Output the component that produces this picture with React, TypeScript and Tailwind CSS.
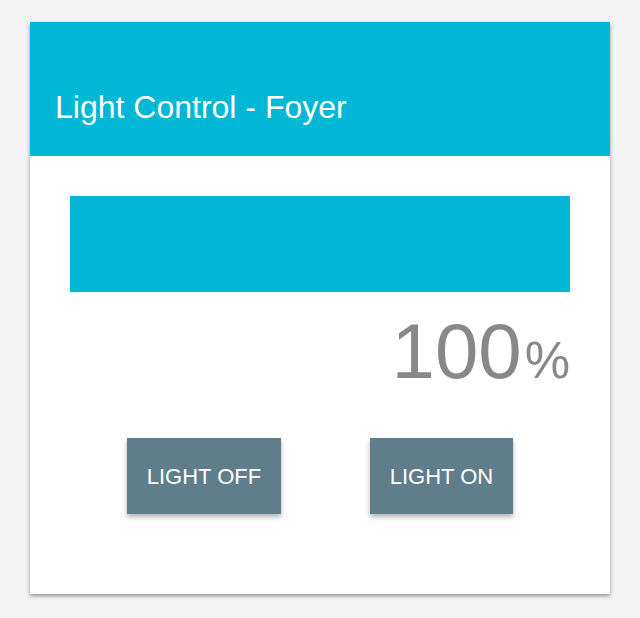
import React from 'react';

const LightButton: React.FC<{ label: string; width: string }> = ({ label, width }) => (
  <button
    className={`${width} h-[76px] flex items-center justify-center pt-[2px] bg-[#607d8b] text-white text-[22px] leading-none shadow-[0_3px_5px_rgba(0,0,0,0.3)]`}
  >
    {label}
  </button>
);

const App: React.FC = () => {
  return (
    <div className="min-h-screen w-full bg-[#f4f4f4] pt-[22px] pl-[30px] font-['Liberation_Sans',Arial,sans-serif]">
      <div className="w-[580px] h-[572px] bg-white flex flex-col shadow-[0_2px_4px_rgba(0,0,0,0.4)]">
        {/* header */}
        <div className="h-[134px] bg-[#00b8d6] flex items-end px-[25px] pb-[29px]">
          <h1 className="text-white text-[32px] leading-[40px]">Light Control - Foyer</h1>
        </div>

        <div className="flex flex-col px-[40px] pt-[40px]">
          {/* level bar */}
          <div className="h-[96px] bg-[#00b8d6]" />

          {/* level */}
          <div className="flex justify-end items-baseline mt-[20px] text-[#888888]">
            <span className="text-[78px] leading-[78px]">100</span>
            <span className="text-[51px] leading-none ml-[3px]">%</span>
          </div>

          {/* buttons */}
          <div className="flex justify-center gap-[89px] mt-[48px]">
            <LightButton label="LIGHT OFF" width="w-[154px]" />
            <LightButton label="LIGHT ON" width="w-[143px]" />
          </div>
        </div>
      </div>
    </div>
  );
};

export default App;
